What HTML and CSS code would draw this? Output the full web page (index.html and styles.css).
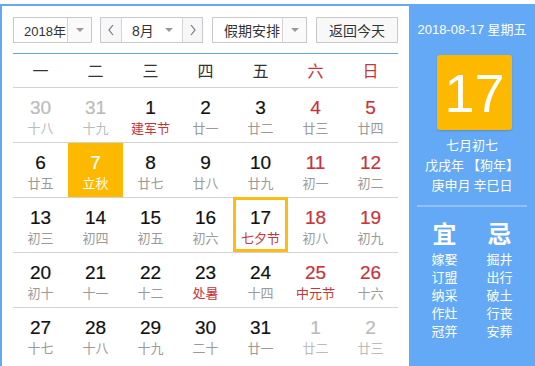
FILE: index.html
```html
<!DOCTYPE html>
<html lang="zh">
<head>
<meta charset="utf-8">
<link rel="stylesheet" href="styles.css">
</head>
<body>
<div class="cal">
  <div class="main">
    <div class="toolbar">
      <div class="sel sel-year">
        <span class="sel-text">2018年</span>
        <span class="sel-arrow"><i class="tri"></i></span>
      </div>
      <div class="sel sel-month">
        <span class="nav"><svg width="8" height="12" viewBox="0 0 8 12"><polyline points="6,1 2,6 6,11" fill="none" stroke="#777" stroke-width="1.2"/></svg></span>
        <span class="sel-text month-text">8月<i class="tri"></i></span>
        <span class="nav nav-r"><svg width="8" height="12" viewBox="0 0 8 12"><polyline points="2,1 6,6 2,11" fill="none" stroke="#777" stroke-width="1.2"/></svg></span>
      </div>
      <div class="sel sel-hol">
        <span class="sel-text">假期安排</span>
        <span class="sel-arrow"><i class="tri"></i></span>
      </div>
      <div class="btn">返回今天</div>
    </div>
    <div class="rule"></div>
    <div class="week">
      <span>一</span><span>二</span><span>三</span><span>四</span><span>五</span><span class="we">六</span><span class="we">日</span>
    </div>
    <div class="grid">
      <div class="row">
        <div class="cell other"><b>30</b><em>十八</em></div>
        <div class="cell other"><b>31</b><em>十九</em></div>
        <div class="cell"><b>1</b><em class="fest">建军节</em></div>
        <div class="cell"><b>2</b><em>廿一</em></div>
        <div class="cell"><b>3</b><em>廿二</em></div>
        <div class="cell we"><b>4</b><em>廿三</em></div>
        <div class="cell we"><b>5</b><em>廿四</em></div>
      </div>
      <div class="row">
        <div class="cell"><b>6</b><em>廿五</em></div>
        <div class="cell sel-day"><b>7</b><em>立秋</em></div>
        <div class="cell"><b>8</b><em>廿七</em></div>
        <div class="cell"><b>9</b><em>廿八</em></div>
        <div class="cell"><b>10</b><em>廿九</em></div>
        <div class="cell we"><b>11</b><em>初一</em></div>
        <div class="cell we"><b>12</b><em>初二</em></div>
      </div>
      <div class="row">
        <div class="cell"><b>13</b><em>初三</em></div>
        <div class="cell"><b>14</b><em>初四</em></div>
        <div class="cell"><b>15</b><em>初五</em></div>
        <div class="cell"><b>16</b><em>初六</em></div>
        <div class="cell today"><b>17</b><em class="fest">七夕节</em></div>
        <div class="cell we"><b>18</b><em>初八</em></div>
        <div class="cell we"><b>19</b><em>初九</em></div>
      </div>
      <div class="row">
        <div class="cell"><b>20</b><em>初十</em></div>
        <div class="cell"><b>21</b><em>十一</em></div>
        <div class="cell"><b>22</b><em>十二</em></div>
        <div class="cell"><b>23</b><em class="fest">处暑</em></div>
        <div class="cell"><b>24</b><em>十四</em></div>
        <div class="cell we"><b>25</b><em class="fest">中元节</em></div>
        <div class="cell we"><b>26</b><em>十六</em></div>
      </div>
      <div class="row last">
        <div class="cell"><b>27</b><em>十七</em></div>
        <div class="cell"><b>28</b><em>十八</em></div>
        <div class="cell"><b>29</b><em>十九</em></div>
        <div class="cell"><b>30</b><em>二十</em></div>
        <div class="cell"><b>31</b><em>廿一</em></div>
        <div class="cell other"><b>1</b><em>廿二</em></div>
        <div class="cell other"><b>2</b><em>廿三</em></div>
      </div>
    </div>
  </div>
  <div class="side">
    <div class="side-date">2018-08-17 星期五</div>
    <div class="big">17</div>
    <div class="lunar">
      <div>七月初七</div>
      <div>戊戌年 【狗年】</div>
      <div>庚申月 辛巳日</div>
    </div>
    <div class="sep"></div>
    <div class="yiji">
      <div class="col">
        <div class="yj-title">宜</div>
        <div>嫁娶</div><div>订盟</div><div>纳采</div><div>作灶</div><div>冠笄</div>
      </div>
      <div class="col">
        <div class="yj-title">忌</div>
        <div>掘井</div><div>出行</div><div>破土</div><div>行丧</div><div>安葬</div>
      </div>
    </div>
  </div>
</div>
</body>
</html>
```

FILE: styles.css
```css
* { box-sizing: border-box; }
html, body { margin: 0; padding: 0; background: #fff; }
body {
  font-family: "Liberation Sans", "Noto Sans CJK SC", sans-serif;
  color: #333;
  width: 535px;
  height: 366px;
  overflow: hidden;
}
.cal {
  margin-top: 4px;
  display: flex;
  border-top: 2px solid #64a9f5;
  border-left: 2px solid #64a9f5;
  height: 362px;
}
.main {
  width: 407px;
  padding: 11px 11px 0;
  background: #fff;
}
.toolbar {
  display: flex;
  height: 26px;
  font-size: 14px;
  white-space: nowrap;
}
.sel, .btn {
  display: flex;
  height: 26px;
  border: 1px solid #c9c9c9;
  background: #fff;
  align-items: stretch;
}
.sel-year { width: 79px; margin-right: 8px; }
.sel-month { width: 103px; margin-right: 9px; }
.sel-hol { width: 95px; margin-right: 9px; }
.btn {
  width: 82px;
  justify-content: center;
  align-items: center;
  background: #f8f8f8;
  color: #333;
}
.sel-text {
  flex: 1;
  min-width: 0;
  display: flex;
  align-items: center;
  padding-left: 8px;
  color: #333;
  white-space: nowrap;
}
.sel-year .sel-text { font-size: 13px; padding-left: 10px; }
.sel-hol .sel-text { padding-left: 11px; }
.sel-arrow {
  width: 24px;
  flex: none;
  border-left: 1px solid #d4d4d4;
  display: flex;
  align-items: center;
  justify-content: center;
  background: #fafafa;
}
.tri {
  display: block;
  width: 0;
  height: 0;
  border-left: 4px solid transparent;
  border-right: 4px solid transparent;
  border-top: 4px solid #999;
}
.nav {
  width: 21px;
  flex: none;
  display: flex;
  align-items: center;
  justify-content: center;
  border-right: 1px solid #d4d4d4;
  background: #f7f7f9;
}
.nav-r { border-right: 0; border-left: 1px solid #d4d4d4; width: 20px; }
.month-text { padding-left: 10px; justify-content: space-between; padding-right: 9px; }
.rule {
  margin-top: 10px;
  height: 1px;
  background: #62a3e6;
}
.week {
  display: grid;
  grid-template-columns: repeat(7, 55px);
  height: 34px;
  border-bottom: 1px solid #d3d3d3;
  font-size: 16px;
  color: #333;
  font-family: "Noto Sans CJK SC", sans-serif;
}
.week span {
  display: flex;
  align-items: center;
  justify-content: center;
  padding-bottom: 1px;
}
.week .we { color: #c8343a; }
.row {
  display: grid;
  grid-template-columns: repeat(7, 55px);
  height: 55px;
  border-bottom: 1px solid #d3d3d3;
}
.row.last { border-bottom: 0; }
.cell {
  display: flex;
  flex-direction: column;
  align-items: center;
  padding-top: 9px;
}
.cell b {
  font-weight: normal;
  font-family: "Liberation Sans", Arial, sans-serif;
  font-size: 19px;
  line-height: 22px;
  color: #111;
  -webkit-text-stroke: 0.2px #111;
}
.cell em {
  font-style: normal;
  font-size: 13px;
  line-height: 18px;
  color: #9a9a9a;
  font-family: "Noto Sans CJK SC", sans-serif;
}
.cell.we b { color: #c8343a; -webkit-text-stroke: 0.2px #c8343a; }
.cell em.fest { color: #c8343a; }
.cell.other b { color: #bbb; -webkit-text-stroke: 0.2px #bbb; }
.cell.other em { color: #bbb; }
.cell.sel-day { background: #fdb900; }
.cell.sel-day b { color: #fff; -webkit-text-stroke: 0.2px #fff; }
.cell.sel-day em { color: #fff; }
.cell.today {
  box-shadow: inset 0 0 0 3px #fbbc16;
  margin-top: -1px;
  padding-top: 10px;
}
.side {
  width: 126px;
  background: #64a9f5;
  color: #fff;
  display: flex;
  flex-direction: column;
  align-items: center;
  padding-top: 14px;
  font-family: "Liberation Sans", "Noto Sans CJK SC", sans-serif;
}
.side-date {
  font-size: 13px;
  line-height: 20px;
  white-space: nowrap;
}
.big {
  margin-top: 15px;
  width: 75px;
  height: 75px;
  background: #fdb900;
  border-radius: 3px;
  box-shadow: 0 1px 2px rgba(0,0,0,0.15);
  display: flex;
  align-items: center;
  justify-content: center;
  font-size: 54px;
  color: #fff;
  margin-left: 5px;
}
.lunar {
  margin-top: 5px;
  font-size: 13px;
  line-height: 20px;
  text-align: center;
  font-family: "Noto Sans CJK SC", sans-serif;
}
.sep {
  margin-top: 10px;
  width: 110px;
  height: 2px;
  background: rgba(255,255,255,0.3);
}
.yiji {
  margin-top: 11px;
  display: flex;
  width: 110px;
  font-family: "Noto Sans CJK SC", sans-serif;
  font-size: 13px;
  line-height: 18px;
}
.col {
  width: 55px;
  display: flex;
  flex-direction: column;
  align-items: center;
}
.yj-title {
  font-size: 24px;
  line-height: 30px;
  font-weight: bold;
  margin-bottom: 2px;
}
```
